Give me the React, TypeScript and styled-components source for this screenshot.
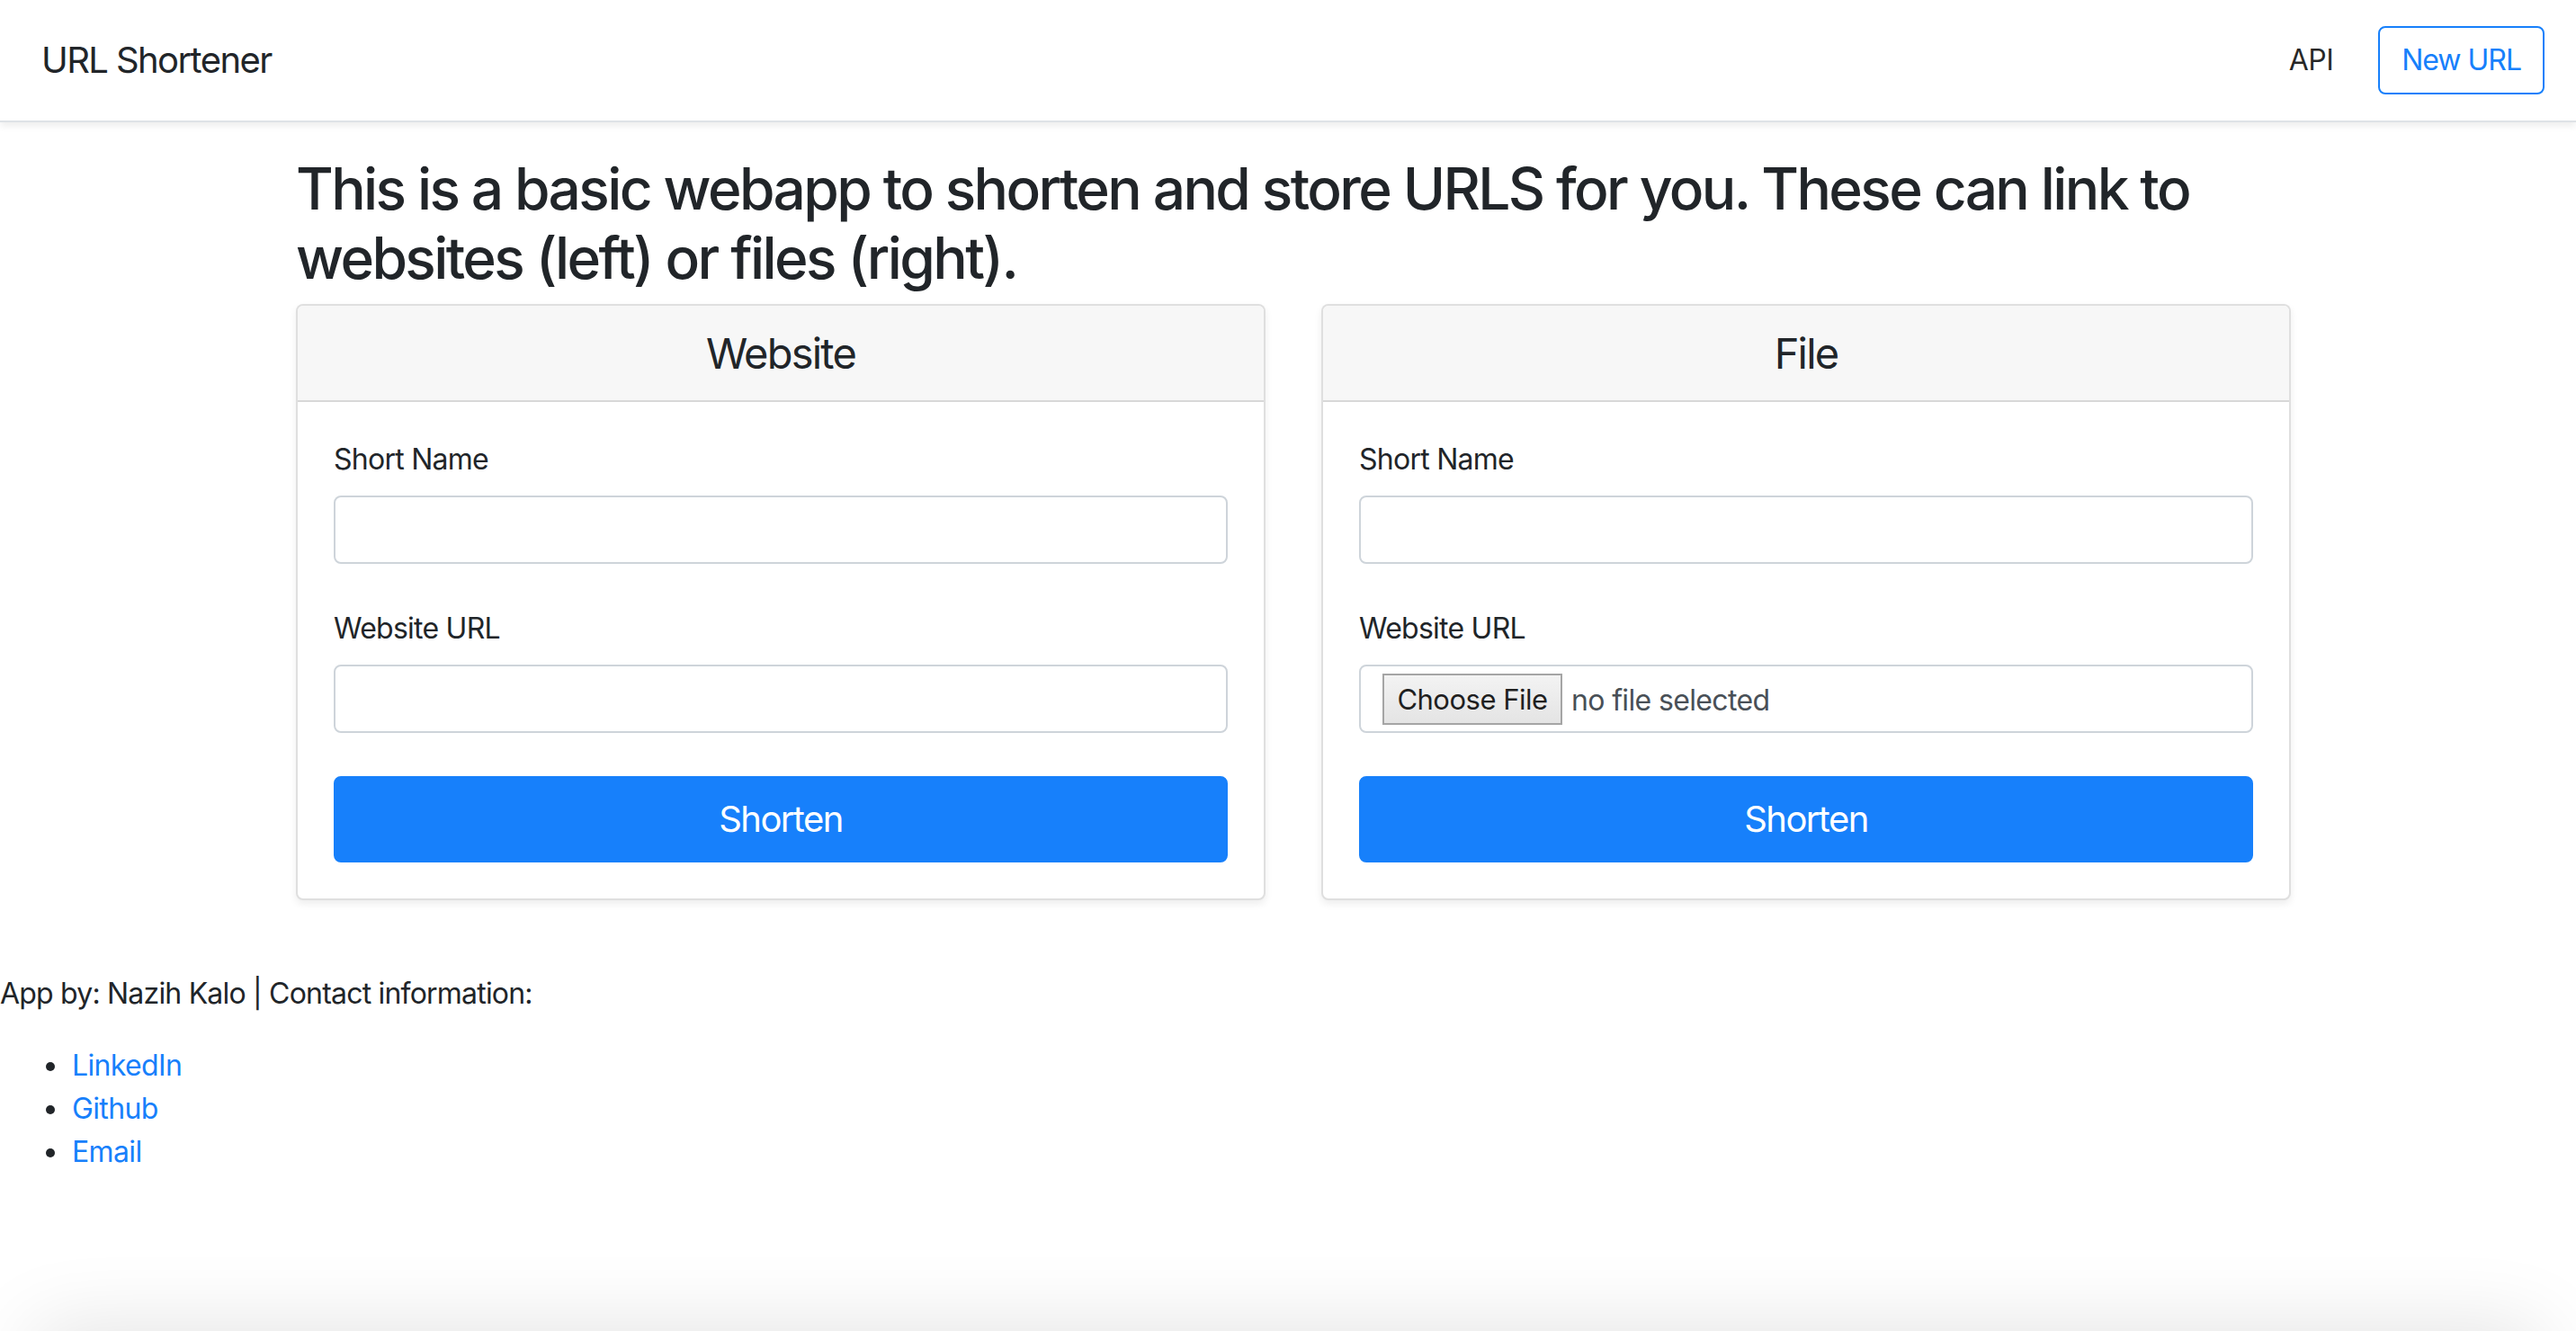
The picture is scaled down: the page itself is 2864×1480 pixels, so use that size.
import React from "react";
import styled, { createGlobalStyle } from "styled-components";

const GlobalStyle = createGlobalStyle`
  html, body {
    margin: 0;
    padding: 0;
    background: #ffffff;
  }
  body {
    font-family: Inter, "Liberation Sans", "Noto Sans", sans-serif;
    font-size: 32px;
    line-height: 1.5;
    color: #212529;
    -webkit-font-smoothing: antialiased;
  }
  * { box-sizing: border-box; }
`;

const Navbar = styled.nav`
  height: 136px;
  display: flex;
  align-items: center;
  justify-content: space-between;
  padding: 0 35px 0 46px;
  background: #ffffff;
  border-bottom: 2px solid #dee2e6;
  box-shadow: 0 4px 8px rgba(0, 0, 0, 0.075);
`;

const Brand = styled.a`
  font-size: 40px;
  line-height: 1.5;
  color: #212529;
  text-decoration: none;
  letter-spacing: -1.6px;
`;

const NavRight = styled.div`
  display: flex;
  align-items: center;
  gap: 50px;
`;

const NavLink = styled.a`
  font-size: 32px;
  color: rgba(0, 0, 0, 0.85);
  text-decoration: none;
  letter-spacing: -0.6px;
`;

const OutlineButton = styled.button`
  font-family: inherit;
  font-size: 32px;
  line-height: 1.5;
  height: 76px;
  padding: 0 24px;
  color: #1780fb;
  background: #ffffff;
  border: 2px solid #1780fb;
  border-radius: 8px;
  letter-spacing: -1px;
  cursor: pointer;
`;

const Container = styled.main`
  width: 2218px;
  margin: 0 0 0 329px;
  padding-top: 36px;
`;

const Lead = styled.h2`
  margin: 0 0 12px 0;
  font-size: 64px;
  font-weight: 500;
  line-height: 1.2;
  letter-spacing: -2.6px;
  color: #212529;
`;

const CardRow = styled.div`
  display: grid;
  grid-template-columns: 1fr 1fr;
  gap: 62px;
`;

const Card = styled.section`
  display: flex;
  flex-direction: column;
  background: #ffffff;
  border: 2px solid rgba(0, 0, 0, 0.125);
  border-radius: 8px;
  box-shadow: 0 4px 8px rgba(0, 0, 0, 0.075);
  overflow: hidden;
`;

const CardHeader = styled.header`
  padding: 24px 40px;
  background: #f7f7f7;
  border-bottom: 2px solid rgba(0, 0, 0, 0.125);
  text-align: center;
`;

const CardTitle = styled.h4`
  margin: 0;
  font-size: 47px;
  font-weight: 400;
  line-height: 1.225;
  letter-spacing: -1.8px;
`;

const CardBody = styled.form`
  padding: 40px;
`;

const FormGroup = styled.div`
  margin-bottom: 48px;
`;

const Label = styled.label`
  display: block;
  margin-bottom: 16px;
  font-size: 32px;
  line-height: 1.5;
  letter-spacing: -0.75px;
`;

const TextInput = styled.input`
  display: block;
  width: 100%;
  height: 76px;
  padding: 12px 24px;
  font-family: inherit;
  font-size: 32px;
  color: #495057;
  background: #ffffff;
  border: 2px solid #ced4da;
  border-radius: 8px;
  outline: none;
`;

const FileBox = styled.div`
  display: flex;
  align-items: center;
  gap: 10px;
  height: 76px;
  padding: 0 24px;
  background: #ffffff;
  border: 2px solid #ced4da;
  border-radius: 8px;
`;

const ChooseButton = styled.span`
  display: inline-flex;
  align-items: center;
  justify-content: center;
  width: 200px;
  height: 57px;
  padding-top: 2px;
  font-size: 31px;
  color: #1f1f1f;
  background: linear-gradient(#f3f3f3, #e4e4e4);
  border: 2px solid #a5a5a5;
  letter-spacing: -0.5px;
`;

const FileHint = styled.span`
  padding-top: 3px;
  font-size: 32px;
  color: #495057;
  letter-spacing: -0.65px;
`;

const PrimaryButton = styled.button`
  display: block;
  width: 100%;
  height: 96px;
  font-family: inherit;
  font-size: 40px;
  line-height: 1.5;
  color: #ffffff;
  background: #1780fb;
  border: 2px solid #1780fb;
  border-radius: 8px;
  cursor: pointer;
  letter-spacing: -1.6px;
`;

const Footer = styled.footer`
  margin-top: 80px;
`;

const Credit = styled.p`
  margin: 0 0 32px 0;
  font-size: 32px;
  letter-spacing: -0.8px;
`;

const LinkList = styled.ul`
  margin: 0;
  padding-left: 78px;
`;

const LinkItem = styled.li`
  font-size: 32px;
  line-height: 1.5;
  padding-left: 2px;
`;

const FooterLink = styled.a`
  color: #1780fb;
  text-decoration: none;
  letter-spacing: -0.65px;
`;

const BottomShade = styled.div`
  position: fixed;
  left: 40px;
  right: 40px;
  bottom: -80px;
  height: 80px;
  box-shadow: 0 0 90px rgba(0, 0, 0, 0.13);
  pointer-events: none;
`;

type FormCardProps = { title: string; file?: boolean };

function FormCard({ title, file }: FormCardProps) {
  return (
    <Card>
      <CardHeader>
        <CardTitle>{title}</CardTitle>
      </CardHeader>
      <CardBody onSubmit={(e) => e.preventDefault()}>
        <FormGroup>
          <Label>Short Name</Label>
          <TextInput type="text" />
        </FormGroup>
        <FormGroup>
          <Label>Website URL</Label>
          {file ? (
            <FileBox>
              <ChooseButton>Choose File</ChooseButton>
              <FileHint>no file selected</FileHint>
            </FileBox>
          ) : (
            <TextInput type="text" />
          )}
        </FormGroup>
        <PrimaryButton type="submit">Shorten</PrimaryButton>
      </CardBody>
    </Card>
  );
}

export default function App() {
  return (
    <>
      <GlobalStyle />
      <Navbar>
        <Brand href="#">URL Shortener</Brand>
        <NavRight>
          <NavLink href="#">API</NavLink>
          <OutlineButton>New URL</OutlineButton>
        </NavRight>
      </Navbar>
      <Container>
        <Lead>
          This is a basic webapp to shorten and store URLS for you. These can link to websites (left) or files (right).
        </Lead>
        <CardRow>
          <FormCard title="Website" />
          <FormCard title="File" file />
        </CardRow>
      </Container>
      <Footer>
        <Credit>App by: Nazih Kalo | Contact information:</Credit>
        <LinkList>
          <LinkItem>
            <FooterLink href="#">LinkedIn</FooterLink>
          </LinkItem>
          <LinkItem>
            <FooterLink href="#">Github</FooterLink>
          </LinkItem>
          <LinkItem>
            <FooterLink href="#">Email</FooterLink>
          </LinkItem>
        </LinkList>
      </Footer>
      <BottomShade />
    </>
  );
}
